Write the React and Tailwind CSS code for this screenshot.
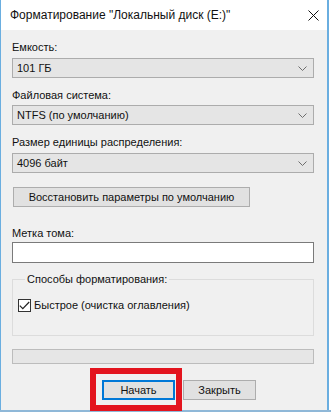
import React from 'react';

const Chevron = () => (
  <svg width="9" height="5" viewBox="0 0 9 5" className="shrink-0">
    <path d="M0.5 0.5 L4.5 4.5 L8.5 0.5" fill="none" stroke="#6d6d6d" strokeWidth="1" />
  </svg>
);

const Combo = ({ value }) => (
  <div className="flex h-[20px] w-[302px] items-center justify-between border border-[#acacac] bg-[#e5e5e5] pl-[4px] pr-[6px]">
    <span className="leading-[16px]">{value}</span>
    <Chevron />
  </div>
);

const Label = ({ children, className = '' }) => (
  <div className={`leading-[16px] ${className}`}>{children}</div>
);

const FormatDialog = () => {
  return (
    <div className="w-[331px] h-[412px] overflow-hidden bg-white flex flex-col" style={{ fontFamily: '"Liberation Sans", Arial, sans-serif' }}>
      <div className="w-[329px] flex-1 flex flex-col border-l border-r-2 border-[#6aaee0] text-[11px] text-[#111]">
        {/* Title bar */}
        <div className="h-[30px] shrink-0 bg-white flex items-center justify-between pl-[9px] pr-[8px]">
          <span className="text-[12px] leading-[16px]">Форматирование "Локальный диск (E:)"</span>
          <svg width="11" height="11" viewBox="0 0 11 11">
            <path d="M0.5 0.5 L10.5 10.5 M10.5 0.5 L0.5 10.5" stroke="#111" strokeWidth="1" />
          </svg>
        </div>

        {/* Body */}
        <div className="flex-1 bg-[#f0f0f0] pl-[11px] pt-[9px] flex flex-col">
          <Label>Емкость:</Label>
          <div className="mt-[3px]"><Combo value="101 ГБ" /></div>

          <Label className="mt-[9px]">Файловая система:</Label>
          <div className="mt-[2px]"><Combo value="NTFS (по умолчанию)" /></div>

          <Label className="mt-[9px]">Размер единицы распределения:</Label>
          <div className="mt-[3px]"><Combo value="4096 байт" /></div>

          <button className="mt-[14px] ml-[1px] h-[20px] w-[237px] whitespace-nowrap border border-[#adadad] bg-[#e1e1e1] text-[11px] leading-[16px] text-center">
            Восстановить параметры по умолчанию
          </button>

          <Label className="mt-[18px]">Метка тома:</Label>
          <div className="mt-[1px] h-[21px] w-[302px] border border-[#7a7a7a] bg-white" />

          <fieldset className="mt-[8px] h-[65px] w-[302px] border border-[#dcdcdc] pl-[5px]">
            <legend className="ml-[7px] px-[2px] leading-[16px]">Способы форматирования:</legend>
            <div className="mt-[10px] flex items-center gap-[3px]">
              <div className="h-[13px] w-[13px] border border-[#333] bg-white flex items-center justify-center">
                <svg width="11" height="9" viewBox="0 0 11 9">
                  <path d="M0.8 4.6 L3.8 7.6 L10.2 1" fill="none" stroke="#222" strokeWidth="1.2" />
                </svg>
              </div>
              <span className="leading-[16px]">Быстрое (очистка оглавления)</span>
            </div>
          </fieldset>

          <div className="mt-[13px] h-[15px] w-[302px] border border-[#bcbcbc] bg-[#e6e6e6]" />

          <div className="mt-[16px] flex gap-[8px] pl-[90px]">
            <div className="relative">
              <button className="h-[20px] w-[73px] border-2 border-[#0078d7] bg-[#e1e1e1] text-[11px] leading-[16px]">
                Начать
              </button>
              <div className="absolute left-[-12px] top-[-12px] w-[92px] h-[43px] border-[6px] border-[#e3141e] pointer-events-none" />
            </div>
            <button className="h-[20px] w-[73px] border border-[#adadad] bg-[#e1e1e1] text-[11px] leading-[16px]">
              Закрыть
            </button>
          </div>
        </div>
      </div>
      <div className="h-[2px] shrink-0 bg-[#8fb8d8]" />
    </div>
  );
};

export default function App() {
  return <FormatDialog />;
}
